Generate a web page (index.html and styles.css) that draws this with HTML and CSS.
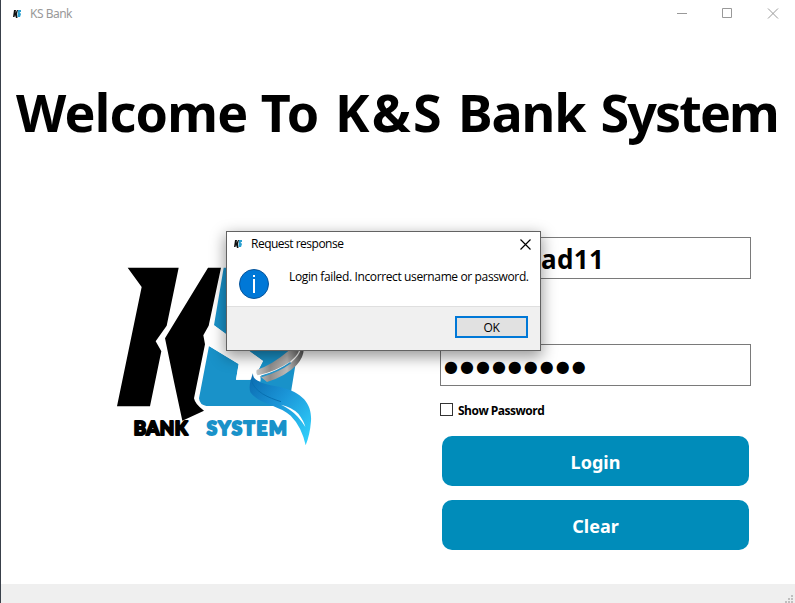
FILE: index.html
```html
<!DOCTYPE html>
<html lang="en">
<head>
<meta charset="utf-8">
<title>KS Bank</title>
<link rel="stylesheet" href="styles.css">
</head>
<body>
<div class="window">
  <header class="titlebar">
    <svg class="app-icon" viewBox="0 0 8 8"><path d="M1 0h2L2.500 3 4 0h1L4 4l.5 4H3L2 5 1.500 7H0z" fill="#111"/><path d="M5 0h3v2H6.500L8 4 7 7H4.500z" fill="#2aa0d0"/></svg>
    <span class="caption">KS Bank</span>
    <svg class="controls" viewBox="0 0 102 12"><g fill="none" stroke="#999"><path d="M0 5.500h10M45.500.5h9v9h-9zM91 .5l10 10M101 .5L91 10.500"/></g></svg>
  </header>
  <h1><span class="w-welcome">Welcome</span> <span>To</span> <span class="w-ks">K&amp;S</span> <span class="w-bank">Bank</span> <span class="w-system">System</span></h1>
  <main>
    <svg class="logo" viewBox="0 0 660 585">
      <defs>
        <linearGradient id="silver" x1="0" x2="1"><stop offset="0" stop-color="#c9c7c6"/><stop offset=".3" stop-color="#8f8d8c"/><stop offset=".65" stop-color="#bdbbba"/><stop offset="1" stop-color="#555"/></linearGradient>
        <linearGradient id="ribbon" x1="0" y1="0" x2="1" y2="1"><stop offset="0" stop-color="#0a69ae"/><stop offset=".45" stop-color="#1b96d8"/><stop offset="1" stop-color="#33d6ff"/></linearGradient>
      </defs>
      <path fill="#1992c9" d="M356 38H620L596 180 556 423 546 453H304Q284 450 282 430L312 273 401 327 393 374H445L474 318 327 211Z"/>
      <path fill="#fff" d="M327 211L474 318 445 374H393L401 327 312 273Z"/>
      <path d="M68 38H221L185 212 152 259 169 289 135 454H36L110 96ZM309 38H348L311 212 295 241 300 268 267 430Q270 448 297 467L232 497 207 380 180 250Z"/>
      <path fill="#fff" d="M452 333Q440 350 443 372L466 380Q470 363 458 354Z"/>
      <path fill="url(#silver)" d="M455 345Q502 329 550 288L596 284Q596 306 575 330 540 365 486 381L465 364Q450 360 455 345Z"/>
      <path fill="none" stroke="#fff" stroke-width="4" d="M459 363Q515 350 557 321 580 302 584 287"/>
      <path fill="none" stroke="#2594c9" stroke-width="5" d="M469 364Q520 350 557 323"/>
      <path fill="url(#ribbon)" d="M444 354C442 380 477 388 522 395 600 413 621 452 618 498Q615 538 602 571 590 515 557 482C525 452 462 448 436 412 430 393 438 372 444 354Z"/>
      <path fill="none" stroke="#0870b1" stroke-width="3" d="M438 374C448 411 490 428 528 440"/>
      <path fill="#fff" d="M528 449Q560 456 580 476 597 498 601 516 580 482 555 465 543 456 528 449Z"/>
      <g class="logo-text"><text x="86" y="541" textLength="162" fill="#000" stroke="#000">BANK</text><text x="305" y="541" textLength="240" fill="#1992c9" stroke="#1992c9">SYSTEM</text></g>
    </svg>
    <form class="login">
      <div class="field username"><span>ad11</span></div>
      <div class="field password"><span>●●●●●●●●●</span></div>
      <label class="show"><i></i><span>Show Password</span></label>
      <div class="actions"><button type="button">Login</button><button type="button">Clear</button></div>
    </form>
  </main>
  <footer><svg viewBox="0 0 8 8"><path fill="#bfbfbf" d="M6 0h2v2H6zM3 3h2v2H3zM6 3h2v2H6zM0 6h2v2H0zM3 6h2v2H3zM6 6h2v2H6z"/></svg></footer>
</div>
<section class="dialog">
  <div class="dialog-title">
    <svg class="app-icon" viewBox="0 0 8 8"><path d="M1 0h2L2.500 3 4 0h1L4 4l.5 4H3L2 5 1.500 7H0z" fill="#111"/><path d="M5 0h3v2H6.500L8 4 7 7H4.500z" fill="#2aa0d0"/></svg>
    <span class="dialog-caption">Request response</span>
    <svg class="close" viewBox="0 0 11 11"><path d="M.5.5l10 10M10.500.5l-10 10" stroke="#000" stroke-width="1.2" fill="none"/></svg>
  </div>
  <div class="dialog-body">
    <svg class="info" viewBox="0 0 30 30"><circle cx="15" cy="15" r="14.500" fill="#0078d7" stroke="#08549a"/><path fill="#fff" d="M14 6h2v2h-2zM14 10h2v14h-2z"/></svg>
    <span class="message">Login failed. Incorrect username or password.</span>
  </div>
  <div class="dialog-foot"><button type="button" class="ok">OK</button></div>
</section>
</body>
</html>
```
FILE: styles.css
```css
* { box-sizing: border-box; }
body { margin: 0; width: 795px; height: 603px; overflow: hidden; background: #fff; font-family: "Open Sans", "Noto Sans", sans-serif; color: #000; }
.window { height: 603px; display: flex; flex-direction: column; border-left: 1px solid #39404a; }
.titlebar { height: 27px; display: flex; align-items: center; padding: 0 16px 0 12px; }
.app-icon { width: 8px; height: 8px; flex: none; }
.caption { margin-left: 9px; font: 12px "Noto Sans", sans-serif; letter-spacing: -0.5px; color: #999; white-space: nowrap; }
.controls { width: 102px; height: 12px; margin-left: auto; }
h1 { margin: 47px 0 0; padding-left: 15px; height: 77px; font: bold 52px/76px "Noto Sans", sans-serif; letter-spacing: -0.42px; white-space: nowrap; }
.w-welcome { letter-spacing: -0.75px; }
.w-ks { letter-spacing: 2.3px; margin-left: 3px; }
.w-bank { letter-spacing: -1.1px; margin-left: 1px; }
.w-system { letter-spacing: -1.9px; margin-left: 2px; }
main { flex: 1; display: grid; grid-template-columns: 220px 311px; column-gap: 115px; padding-left: 104px; align-items: start; }
.logo { width: 220px; height: 195px; margin-top: 104px; }
.logo-text { font: 900 56px "Lato", sans-serif; stroke-width: 6px; stroke-linejoin: round; }
.login { display: flex; flex-direction: column; margin-top: 86px; }
.field { height: 42px; border: 1px solid #7a7a7a; display: flex; align-items: center; white-space: nowrap; }
.username { padding: 1px 0 0 100px; font: bold 26px "Noto Sans", sans-serif; letter-spacing: 0.4px; }
.password { margin-top: 65px; padding: 3px 0 0 3px; font: 16px/40px "DejaVu Sans", sans-serif; letter-spacing: 2px; }
.show { margin-top: 17px; height: 14px; display: flex; align-items: center; font: bold 12px/14px "Open Sans", sans-serif; letter-spacing: -0.5px; white-space: nowrap; }
.show i { width: 13px; height: 13px; border: 1px solid #333; margin-right: 5px; transform: translateY(-1px); }
.show span { padding-top: 2px; }
.actions { display: grid; gap: 14px; margin: 19px 2px 0; }
.actions button { height: 50px; border: 0; border-radius: 10px; background: #008cba; color: #fff; padding: 1px 0 0; font: bold 18px "Noto Sans", sans-serif; }
footer { height: 19px; background: #efefef; display: flex; justify-content: flex-end; align-items: flex-end; padding-right: 2px; }
footer svg { width: 8px; height: 8px; }
.dialog { position: absolute; left: 226px; top: 231px; width: 315px; height: 120px; border: 1px solid #626262; background: #fff; display: flex; flex-direction: column; box-shadow: 0 5px 14px 1px rgba(0,0,0,.4); }
.dialog-title { height: 24px; display: flex; align-items: center; padding: 0 9px 0 7px; }
.dialog-caption { margin-left: 9px; font: 12px/16px "Open Sans", sans-serif; letter-spacing: -0.5px; white-space: nowrap; }
.close { width: 11px; height: 11px; margin-left: auto; }
.dialog-body { height: 50px; display: flex; align-items: flex-start; padding: 13px 0 0 12px; }
.info { width: 30px; height: 30px; flex: none; }
.message { margin-left: 20px; font: 12px/15px "Open Sans", sans-serif; letter-spacing: -0.37px; white-space: nowrap; }
.dialog-foot { flex: 1; background: #f0f0f0; border-top: 1px solid #dfdfdf; display: flex; justify-content: flex-end; padding: 9px 12px 0 0; }
.ok { width: 73px; height: 22px; border: 2px solid #0078d7; background: #e1e1e1; padding: 0; font: 12px "Open Sans", sans-serif; letter-spacing: -0.4px; }
```
